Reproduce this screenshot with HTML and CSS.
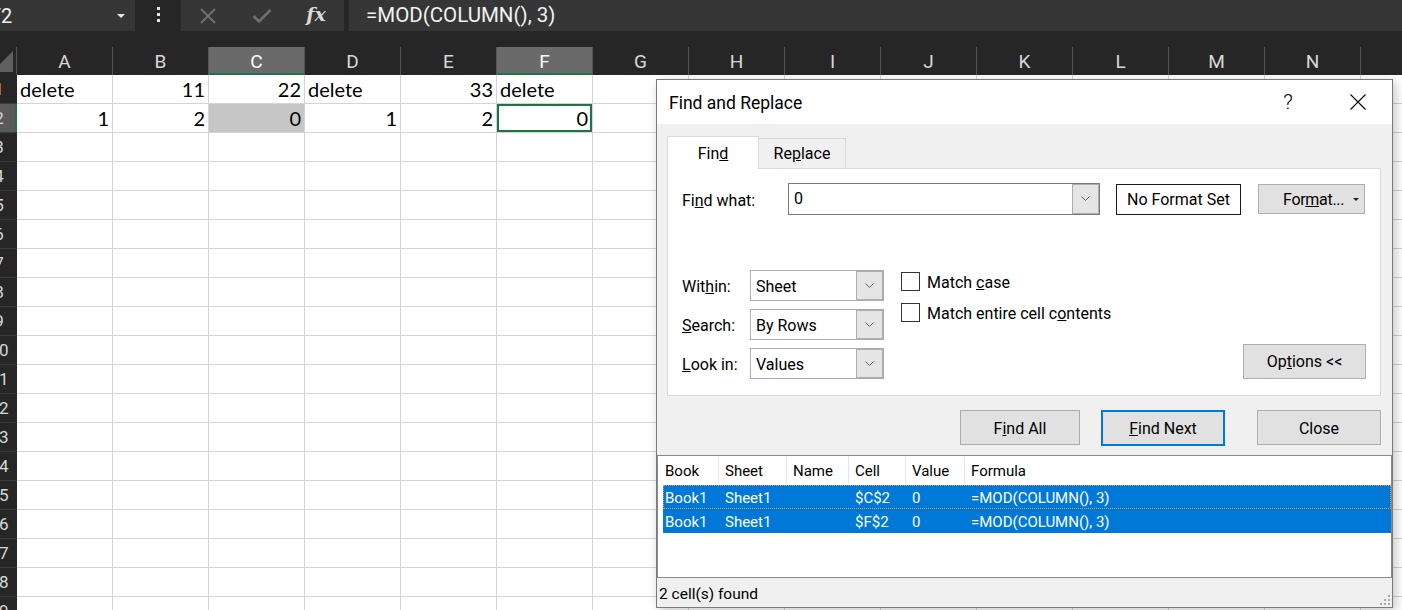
FILE: index.html
```html
<!DOCTYPE html>
<html>
<head>
<meta charset="utf-8">
<link rel="stylesheet" href="styles.css">
</head>
<body>
<div class="topbar">
  <div class="namebox"><span class="ref">F2</span><span class="arrow"></span></div>
  <div class="dots"><i></i><i></i><i></i></div>
  <div class="fxbox">
    <span class="slot"><svg width="18" height="18" viewBox="0 0 18 18"><path d="M2 2 L16 16 M16 2 L2 16" stroke="#6f6f6f" stroke-width="2" fill="none"/></svg></span>
    <span class="slot"><svg width="20" height="16" viewBox="0 0 20 16"><path d="M1.5 8 L7 13.5 L18.5 2" stroke="#6f6f6f" stroke-width="2.6" fill="none"/></svg></span>
    <span class="slot fx">fx</span>
  </div>
  <div class="formula">=MOD(COLUMN(), 3)</div>
</div>
<div class="gap"></div>
<div class="sheet">
  <div class="corner"><svg width="16" height="28" viewBox="0 0 16 28"><polygon points="13,4 13,25 -8,25" fill="#5f5f5f"/></svg></div>
  <div class="ch">A</div><div class="ch">B</div><div class="ch sel">C</div><div class="ch">D</div><div class="ch">E</div><div class="ch sel">F</div><div class="ch">G</div><div class="ch">H</div><div class="ch">I</div><div class="ch">J</div><div class="ch">K</div><div class="ch">L</div><div class="ch">M</div><div class="ch">N</div><div class="ch">O</div>

  <div class="rh"><span>1</span></div>
  <div class="c">delete</div><div class="c r">11</div><div class="c r">22</div><div class="c">delete</div><div class="c r">33</div><div class="c">delete</div><div class="c"></div><div class="c"></div><div class="c"></div><div class="c"></div><div class="c"></div><div class="c"></div><div class="c"></div><div class="c"></div><div class="c"></div>

  <div class="rh sel"><span>2</span></div>
  <div class="c r">1</div><div class="c r">2</div><div class="c r hl">0</div><div class="c r">1</div><div class="c r">2</div><div class="c r active">0</div><div class="c"></div><div class="c"></div><div class="c"></div><div class="c"></div><div class="c"></div><div class="c"></div><div class="c"></div><div class="c"></div><div class="c"></div>

  <div class="rh"><span>3</span></div><div class="c"></div><div class="c"></div><div class="c"></div><div class="c"></div><div class="c"></div><div class="c"></div><div class="c"></div><div class="c"></div><div class="c"></div><div class="c"></div><div class="c"></div><div class="c"></div><div class="c"></div><div class="c"></div><div class="c"></div>
  <div class="rh"><span>4</span></div><div class="c"></div><div class="c"></div><div class="c"></div><div class="c"></div><div class="c"></div><div class="c"></div><div class="c"></div><div class="c"></div><div class="c"></div><div class="c"></div><div class="c"></div><div class="c"></div><div class="c"></div><div class="c"></div><div class="c"></div>
  <div class="rh"><span>5</span></div><div class="c"></div><div class="c"></div><div class="c"></div><div class="c"></div><div class="c"></div><div class="c"></div><div class="c"></div><div class="c"></div><div class="c"></div><div class="c"></div><div class="c"></div><div class="c"></div><div class="c"></div><div class="c"></div><div class="c"></div>
  <div class="rh"><span>6</span></div><div class="c"></div><div class="c"></div><div class="c"></div><div class="c"></div><div class="c"></div><div class="c"></div><div class="c"></div><div class="c"></div><div class="c"></div><div class="c"></div><div class="c"></div><div class="c"></div><div class="c"></div><div class="c"></div><div class="c"></div>
  <div class="rh"><span>7</span></div><div class="c"></div><div class="c"></div><div class="c"></div><div class="c"></div><div class="c"></div><div class="c"></div><div class="c"></div><div class="c"></div><div class="c"></div><div class="c"></div><div class="c"></div><div class="c"></div><div class="c"></div><div class="c"></div><div class="c"></div>
  <div class="rh"><span>8</span></div><div class="c"></div><div class="c"></div><div class="c"></div><div class="c"></div><div class="c"></div><div class="c"></div><div class="c"></div><div class="c"></div><div class="c"></div><div class="c"></div><div class="c"></div><div class="c"></div><div class="c"></div><div class="c"></div><div class="c"></div>
  <div class="rh"><span>9</span></div><div class="c"></div><div class="c"></div><div class="c"></div><div class="c"></div><div class="c"></div><div class="c"></div><div class="c"></div><div class="c"></div><div class="c"></div><div class="c"></div><div class="c"></div><div class="c"></div><div class="c"></div><div class="c"></div><div class="c"></div>
  <div class="rh"><span>10</span></div><div class="c"></div><div class="c"></div><div class="c"></div><div class="c"></div><div class="c"></div><div class="c"></div><div class="c"></div><div class="c"></div><div class="c"></div><div class="c"></div><div class="c"></div><div class="c"></div><div class="c"></div><div class="c"></div><div class="c"></div>
  <div class="rh"><span>11</span></div><div class="c"></div><div class="c"></div><div class="c"></div><div class="c"></div><div class="c"></div><div class="c"></div><div class="c"></div><div class="c"></div><div class="c"></div><div class="c"></div><div class="c"></div><div class="c"></div><div class="c"></div><div class="c"></div><div class="c"></div>
  <div class="rh"><span>12</span></div><div class="c"></div><div class="c"></div><div class="c"></div><div class="c"></div><div class="c"></div><div class="c"></div><div class="c"></div><div class="c"></div><div class="c"></div><div class="c"></div><div class="c"></div><div class="c"></div><div class="c"></div><div class="c"></div><div class="c"></div>
  <div class="rh"><span>13</span></div><div class="c"></div><div class="c"></div><div class="c"></div><div class="c"></div><div class="c"></div><div class="c"></div><div class="c"></div><div class="c"></div><div class="c"></div><div class="c"></div><div class="c"></div><div class="c"></div><div class="c"></div><div class="c"></div><div class="c"></div>
  <div class="rh"><span>14</span></div><div class="c"></div><div class="c"></div><div class="c"></div><div class="c"></div><div class="c"></div><div class="c"></div><div class="c"></div><div class="c"></div><div class="c"></div><div class="c"></div><div class="c"></div><div class="c"></div><div class="c"></div><div class="c"></div><div class="c"></div>
  <div class="rh"><span>15</span></div><div class="c"></div><div class="c"></div><div class="c"></div><div class="c"></div><div class="c"></div><div class="c"></div><div class="c"></div><div class="c"></div><div class="c"></div><div class="c"></div><div class="c"></div><div class="c"></div><div class="c"></div><div class="c"></div><div class="c"></div>
  <div class="rh"><span>16</span></div><div class="c"></div><div class="c"></div><div class="c"></div><div class="c"></div><div class="c"></div><div class="c"></div><div class="c"></div><div class="c"></div><div class="c"></div><div class="c"></div><div class="c"></div><div class="c"></div><div class="c"></div><div class="c"></div><div class="c"></div>
  <div class="rh"><span>17</span></div><div class="c"></div><div class="c"></div><div class="c"></div><div class="c"></div><div class="c"></div><div class="c"></div><div class="c"></div><div class="c"></div><div class="c"></div><div class="c"></div><div class="c"></div><div class="c"></div><div class="c"></div><div class="c"></div><div class="c"></div>
  <div class="rh"><span>18</span></div><div class="c"></div><div class="c"></div><div class="c"></div><div class="c"></div><div class="c"></div><div class="c"></div><div class="c"></div><div class="c"></div><div class="c"></div><div class="c"></div><div class="c"></div><div class="c"></div><div class="c"></div><div class="c"></div><div class="c"></div>
  <div class="rh"><span>19</span></div><div class="c"></div><div class="c"></div><div class="c"></div><div class="c"></div><div class="c"></div><div class="c"></div><div class="c"></div><div class="c"></div><div class="c"></div><div class="c"></div><div class="c"></div><div class="c"></div><div class="c"></div><div class="c"></div><div class="c"></div>
</div>
<div class="dialog">
  <div class="titlebar">
    <span class="title">Find and Replace</span>
    <span class="help">?</span>
    <span class="xclose"><svg width="16" height="16" viewBox="0 0 16 16"><path d="M0.5 0.5 L15.5 15.5 M15.5 0.5 L0.5 15.5" stroke="#000" stroke-width="1.1" fill="none"/></svg></span>
  </div>
  <div class="dbody">
    <div class="tabs">
      <div class="tab active">Fin<u>d</u></div>
      <div class="tab">Re<u>p</u>lace</div>
    </div>
    <div class="panel">
      <div class="findrow">
        <span class="lbl lfind">Fi<u>n</u>d what:</span>
        <div class="combo cwide"><span class="ctext">0</span><span class="ddbtn"><svg width="9" height="6" viewBox="0 0 9 6"><path d="M0.5 0.5 L4.5 4.5 L8.5 0.5" stroke="#606060" stroke-width="1" fill="none"/></svg></span></div>
        <div class="nofmt">No Format Set</div>
        <div class="btn fmtbtn"><span>For<u>m</u>at...</span><span class="caret"></span></div>
      </div>
      <div class="lower">
        <div class="selects">
          <div class="srow"><span class="lbl lsel">Wit<u>h</u>in:</span><div class="combo csel"><span class="ctext">Sheet</span><span class="ddbtn"><svg width="9" height="6" viewBox="0 0 9 6"><path d="M0.5 0.5 L4.5 4.5 L8.5 0.5" stroke="#606060" stroke-width="1" fill="none"/></svg></span></div></div>
          <div class="srow"><span class="lbl lsel"><u>S</u>earch:</span><div class="combo csel"><span class="ctext">By Rows</span><span class="ddbtn"><svg width="9" height="6" viewBox="0 0 9 6"><path d="M0.5 0.5 L4.5 4.5 L8.5 0.5" stroke="#606060" stroke-width="1" fill="none"/></svg></span></div></div>
          <div class="srow"><span class="lbl lsel"><u>L</u>ook in:</span><div class="combo csel"><span class="ctext">Values</span><span class="ddbtn"><svg width="9" height="6" viewBox="0 0 9 6"><path d="M0.5 0.5 L4.5 4.5 L8.5 0.5" stroke="#606060" stroke-width="1" fill="none"/></svg></span></div></div>
        </div>
        <div class="checks">
          <div class="chk"><span class="box"></span><span>Match <u>c</u>ase</span></div>
          <div class="chk"><span class="box"></span><span>Match entire cell c<u>o</u>ntents</span></div>
        </div>
        <div class="btn optbtn">Op<u>t</u>ions &lt;&lt;</div>
      </div>
    </div>
    <div class="actions">
      <div class="btn b1">F<u>i</u>nd All</div>
      <div class="btn b2 default"><span><u>F</u>ind Next</span></div>
      <div class="btn b3">Close</div>
    </div>
  </div>
  <div class="results">
    <div class="lhead">
      <span class="hc h1">Book</span><span class="hc h2">Sheet</span><span class="hc h3">Name</span><span class="hc h4">Cell</span><span class="hc h5">Value</span><span class="hc h6">Formula</span>
    </div>
    <div class="lrow focus">
      <span class="rc r1">Book1</span><span class="rc r2">Sheet1</span><span class="rc r3"></span><span class="rc r4">$C$2</span><span class="rc r5">0</span><span class="rc r6">=MOD(COLUMN(), 3)</span>
    </div>
    <div class="lrow">
      <span class="rc r1">Book1</span><span class="rc r2">Sheet1</span><span class="rc r3"></span><span class="rc r4">$F$2</span><span class="rc r5">0</span><span class="rc r6">=MOD(COLUMN(), 3)</span>
    </div>
  </div>
  <div class="status">
    <span>2 cell(s) found</span>
    <svg class="grip" width="11" height="11" viewBox="0 0 11 11"><g fill="#a8a8a8"><rect x="8" y="0" width="2" height="2"/><rect x="4" y="4" width="2" height="2"/><rect x="8" y="4" width="2" height="2"/><rect x="0" y="8" width="2" height="2"/><rect x="4" y="8" width="2" height="2"/><rect x="8" y="8" width="2" height="2"/></g></svg>
  </div>
</div>
</body>
</html>
```
FILE: styles.css
```css
* { box-sizing: border-box; }
html, body { margin: 0; padding: 0; }
body {
  width: 1402px;
  height: 610px;
  overflow: hidden;
  background: #262626;
  position: relative;
  font-family: Roboto, "Liberation Sans", sans-serif;
}

/* ---------- formula bar ---------- */
.topbar { display: flex; height: 31px; background: #262626; }
.namebox {
  width: 135px;
  background: #363636;
  display: flex;
  align-items: center;
  justify-content: space-between;
  overflow: hidden;
  color: #f2f2f2;
  font-size: 20px;
}
.namebox .ref { margin-left: -10px; }
.namebox .arrow {
  width: 0; height: 0;
  border-left: 4px solid transparent;
  border-right: 4px solid transparent;
  border-top: 4px solid #e6e6e6;
  margin-right: 10px;
}
.dots {
  width: 46px;
  display: flex;
  flex-direction: column;
  align-items: center;
  justify-content: center;
  gap: 3px;
  padding-bottom: 3px;
}
.dots i { display: block; width: 3px; height: 3px; background: #e6e6e6; }
.fxbox { width: 163px; background: #363636; display: flex; align-items: center; }
.slot { width: 54px; display: flex; justify-content: center; align-items: center; }
.fx {
  font-family: "DejaVu Serif", "Liberation Serif", serif;
  font-style: italic;
  font-weight: bold;
  color: #dadada;
  font-size: 19px;
  padding-bottom: 3px;
}
.formula {
  flex: 1;
  margin-left: 5px;
  background: #363636;
  color: #f2f2f2;
  font-size: 20.5px;
  padding-left: 17px;
  padding-bottom: 2px;
  display: flex;
  align-items: center;
}
.gap { height: 16px; }

/* ---------- sheet ---------- */
.sheet {
  display: grid;
  grid-template-columns: 17px repeat(15, 96px);
  grid-template-rows: 28px;
  grid-auto-rows: 29px;
  background: #fff;
  height: 563px;
}
.corner { background: #262626; border-right: 1px solid #555; overflow: hidden; }
.corner svg { display: block; }
.ch {
  background: #262626;
  border-right: 1px solid #555;
  color: #d8d8d8;
  font-size: 19px;
  text-align: center;
  line-height: 30px;
}
.ch.sel { background: #6a6a6a; color: #fff; box-shadow: inset 0 -2px 0 #217346; }
.rh {
  background: #262626;
  border-bottom: 1px solid #3c3c3c;
  overflow: hidden;
  color: #d8d8d8;
  font-size: 17px;
  line-height: 29px;
}
.rh span { display: block; width: 34px; margin-left: -18px; text-align: center; }
.rh.sel { background: #5a5a5a; box-shadow: inset -2px 0 0 #217346; }
.c {
  border-right: 1px solid #d4d4d4;
  border-bottom: 1px solid #d4d4d4;
  font-family: Lato, "Liberation Sans", sans-serif;
  font-size: 20px;
  line-height: 29px;
  padding: 0 3px;
  white-space: nowrap;
  color: #000;
}
.c.r { text-align: right; }
.c.hl { background: #c6c6c6; }
.c.active { box-shadow: inset 0 0 0 2px #217346; padding-right: 4px; }

/* ---------- dialog ---------- */
.dialog {
  position: absolute;
  left: 656px;
  top: 79px;
  width: 737px;
  height: 529px;
  border: 1px solid #7a7a7a;
  background: #f0f0f0;
  box-shadow: 3px 3px 10px rgba(0,0,0,0.22);
  display: flex;
  flex-direction: column;
  color: #000;
  font-family: Roboto, "Liberation Sans", sans-serif;
  font-size: 16px;
}
.titlebar {
  height: 44px;
  background: #fff;
  display: flex;
  align-items: center;
  padding-left: 12px;
  flex: none;
}
.title { flex: 1; font-size: 17.5px; padding-top: 1px; }
.help { width: 20px; text-align: center; font-size: 21px; font-weight: 300; margin-right: 52px; }
.xclose { width: 16px; margin-right: 26px; display: flex; }
.dbody { padding: 12px 11px 0 10px; flex: none; }
.tabs { display: flex; align-items: flex-end; height: 32px; }
.tab {
  height: 30px;
  width: 87px;
  border: 1px solid #d9d9d9;
  border-left: none;
  border-bottom: none;
  display: flex;
  align-items: center;
  justify-content: center;
  background: #f0f0f0;
}
.tab.active {
  width: 92px;
  height: 33px;
  border-left: 1px solid #d9d9d9;
  background: #fff;
  margin-bottom: -1px;
  position: relative;
  z-index: 1;
}
.panel {
  height: 228px;
  background: #fff;
  border: 1px solid #d9d9d9;
  padding: 14px 14px 0 14px;
}
.findrow { display: flex; align-items: center; height: 32px; }
.lbl { display: block; padding-top: 2px; }
.lfind { width: 106px; }
.combo {
  display: flex;
  align-items: center;
  background: #fff;
  border: 1px solid #7a7a7a;
}
.cwide { width: 312px; height: 32px; }
.cwide .ctext { padding-bottom: 2px; padding-top: 0; }
.csel { width: 134px; height: 31px; border-color: #adadad; }
.ctext { flex: 1; padding-left: 5px; padding-top: 2px; }
.ddbtn {
  width: 27px;
  height: 100%;
  background: #e5e5e5;
  border: 1px solid #adadad;
  display: flex;
  align-items: center;
  justify-content: center;
}
.nofmt {
  margin-left: 16px;
  width: 125px;
  height: 31px;
  border: 1px solid #1a1a1a;
  display: flex;
  align-items: center;
  justify-content: center;
}
.btn {
  background: #e1e1e1;
  border: 1px solid #adadad;
  display: flex;
  align-items: center;
  justify-content: center;
}
.fmtbtn { margin-left: 17px; width: 107px; height: 30px; justify-content: flex-start; padding-left: 24px; padding-top: 1px; }
.fmtbtn > span:first-child { letter-spacing: -0.3px; }
.caret {
  margin-left: 9px;
  width: 0; height: 0;
  border-left: 3px solid transparent;
  border-right: 3px solid transparent;
  border-top: 3px solid #222;
}
.lower { display: flex; margin-top: 55px; height: 109px; }
.selects { display: flex; flex-direction: column; gap: 8px; }
.srow { display: flex; align-items: center; }
.lsel { width: 68px; }
.checks { margin-left: 17px; padding-top: 2px; display: flex; flex-direction: column; gap: 12px; }
.chk { display: flex; align-items: center; gap: 7px; height: 19px; }
.chk > span:last-child { padding-top: 1px; }
.box { width: 19px; height: 19px; border: 1px solid #333; background: #fff; }
.optbtn { margin-left: auto; align-self: flex-end; width: 123px; height: 35px; }
.actions {
  display: flex;
  justify-content: flex-end;
  align-items: flex-start;
  margin-top: 14px;
  height: 36px;
  margin-bottom: 9px;
}
.actions .btn { padding-top: 1px; }
.b1 { width: 120px; height: 35px; }
.b2 { width: 124px; height: 36px; margin-left: 21px; border: 2px solid #0078d7; }
.b3 { width: 124px; height: 35px; margin-left: 32px; }
.results {
  height: 123px;
  background: #fff;
  border: 1px solid #8a8a8a;
  flex: none;
  font-size: 15px;
}
.lhead { display: flex; height: 28px; align-items: stretch; }
.hc { display: flex; align-items: center; padding-left: 6px; padding-top: 2px; border-right: 1px solid #e5e5e5; }
.h1 { width: 61px; padding-left: 7px; }
.h2 { width: 68px; }
.h3 { width: 62px; }
.h4 { width: 57px; }
.h5 { width: 59px; }
.h6 { border-right: none; flex: 1; }
.lrow {
  display: flex;
  height: 24px;
  margin-left: 5px;
  background: #0078d7;
  color: #fff;
  align-items: center;
  padding-top: 1px;
}
.lhead + .lrow { margin-top: 1px; }
.lrow.focus { outline: 1px dotted #e59a3c; outline-offset: -1px; }
.rc { padding-left: 6px; white-space: nowrap; }
.r1 { width: 56px; padding-left: 2px; }
.r2 { width: 68px; }
.r3 { width: 62px; }
.r4 { width: 57px; }
.r5 { width: 59px; }
.r6 { flex: 1; }
.status {
  height: 29px;
  display: flex;
  align-items: center;
  justify-content: space-between;
  padding-left: 2px;
  font-size: 15.5px;
  flex: none;
}
.status > span { padding-top: 3px; }
.grip { align-self: flex-end; margin-bottom: 1px; margin-right: 1px; }
```
